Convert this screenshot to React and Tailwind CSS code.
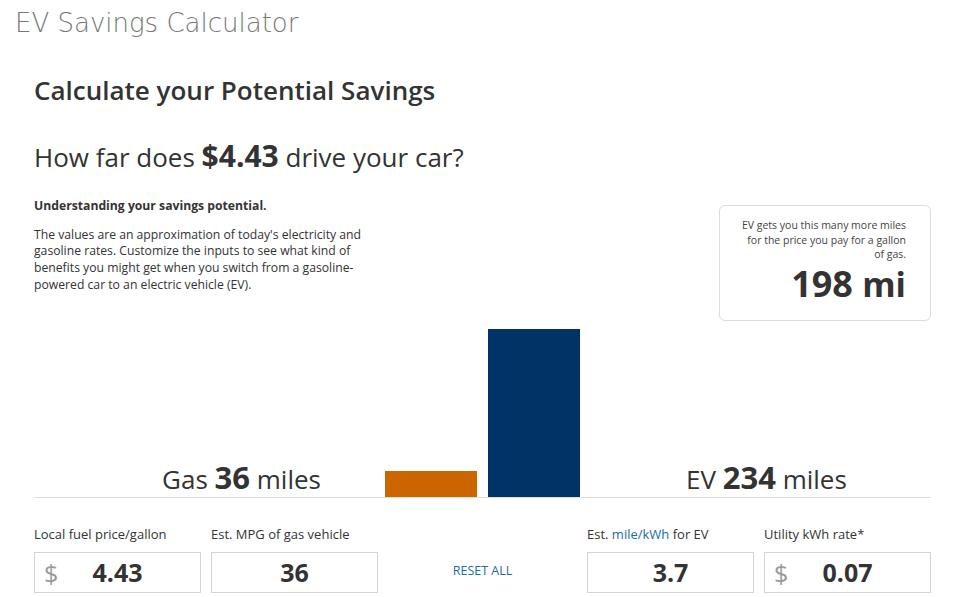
import React, { useState } from 'react';

const FONT = { fontFamily: '"Open Sans", "Liberation Sans", sans-serif' };

const ValueInput = ({ label, value, prefix }) => (
  <div className="w-[167px]">
    <div className="text-[13px] leading-[18px] text-[#333] mb-[9px]">{label}</div>
    <div className="relative h-[41px] border border-[#d4d4d4] flex items-center justify-center">
      {prefix && (
        <span className="absolute left-[9px] top-[5px] text-[25px] leading-[30px] text-[#999]">{prefix}</span>
      )}
      <span className="text-[25px] font-bold text-[#333] leading-none">{value}</span>
    </div>
  </div>
);

const App = () => {
  const [values] = useState({ price: '4.43', mpg: '36', mpk: '3.7', rate: '0.07' });

  // bar heights from the miles, scaled to the chart
  const gasMiles = 36;
  const evMiles = 234;
  const maxH = 168;
  const gasH = Math.round((gasMiles / evMiles) * maxH);

  return (
    <div className="w-[960px] h-[597px] bg-white overflow-hidden text-[#333]" style={FONT}>
      {/* Page title */}
      <div
        className="pl-[15px] pt-[7px] text-[26px] leading-[32px] text-[#777]"
        style={{ fontFamily: '"DejaVu Sans", "Noto Sans", sans-serif', fontWeight: 300 }}
      >
        EV Savings Calculator
      </div>

      <div className="pl-[34px] pr-[29px]">
        <h2 className="mt-[35px] text-[26px] leading-[32px] font-semibold text-[#333]">
          Calculate your Potential Savings
        </h2>
        <h3 className="mt-[33px] text-[26px] leading-[34px] text-[#333]">
          How far does <span className="font-bold text-[30px]">$4.43</span> drive your car?
        </h3>

        <div className="flex justify-between items-start mt-[24px]">
          <div className="w-[340px] text-[12.2px] leading-[16.7px]">
            <p className="font-bold">Understanding your savings potential.</p>
            <p className="mt-[12px]">
              The values are an approximation of today's electricity and gasoline rates. Customize the inputs to see
              what kind of benefits you might get when you switch from a gasoline-powered car to an electric vehicle
              (EV).
            </p>
          </div>
          <div className="mt-[7px] w-[212px] h-[116px] border border-[#dcdcdc] rounded-[6px] pr-[24px] pt-[12px] text-right">
            <p className="text-[10.5px] leading-[14.5px] text-[#444] pl-[16px]">
              EV gets you this many more miles for the price you pay for a gallon of gas.
            </p>
            <p className="text-[36px] font-bold leading-[40px] mt-[2px]">
              198 <span className="text-[34px]">mi</span>
            </p>
          </div>
        </div>

        {/* Chart */}
        <div className="flex items-end h-[177px] border-b border-[#dedede]">
          <div className="w-[351px] flex justify-end pr-[64px] pb-[2px]">
            <span className="text-[26px] leading-[32px]">
              Gas <span className="font-bold text-[31px]">{gasMiles}</span> miles
            </span>
          </div>
          <div className="w-[92px] bg-[#cc6500]" style={{ height: gasH }} />
          <div className="w-[11px]" />
          <div className="w-[92px] bg-[#013366]" style={{ height: maxH }} />
          <div className="flex-1 pl-[106px] pb-[2px]">
            <span className="text-[26px] leading-[32px]">
              EV <span className="font-bold text-[31px]">{evMiles}</span> miles
            </span>
          </div>
        </div>

        {/* Inputs */}
        <div className="flex items-start mt-[27px]">
          <ValueInput label="Local fuel price/gallon" value={values.price} prefix="$" />
          <div className="w-[10px]" />
          <ValueInput label="Est. MPG of gas vehicle" value={values.mpg} />
          <div className="w-[209px] flex justify-center pt-[37px]">
            <button className="text-[12.5px] leading-[18px] text-[#1b6e9e] uppercase">Reset All</button>
          </div>
          <ValueInput
            label={
              <>
                Est. <span className="text-[#1b6e9e]">mile/kWh</span> for EV
              </>
            }
            value={values.mpk}
          />
          <div className="w-[10px]" />
          <ValueInput label="Utility kWh rate*" value={values.rate} prefix="$" />
        </div>
      </div>
    </div>
  );
};

export default App;
